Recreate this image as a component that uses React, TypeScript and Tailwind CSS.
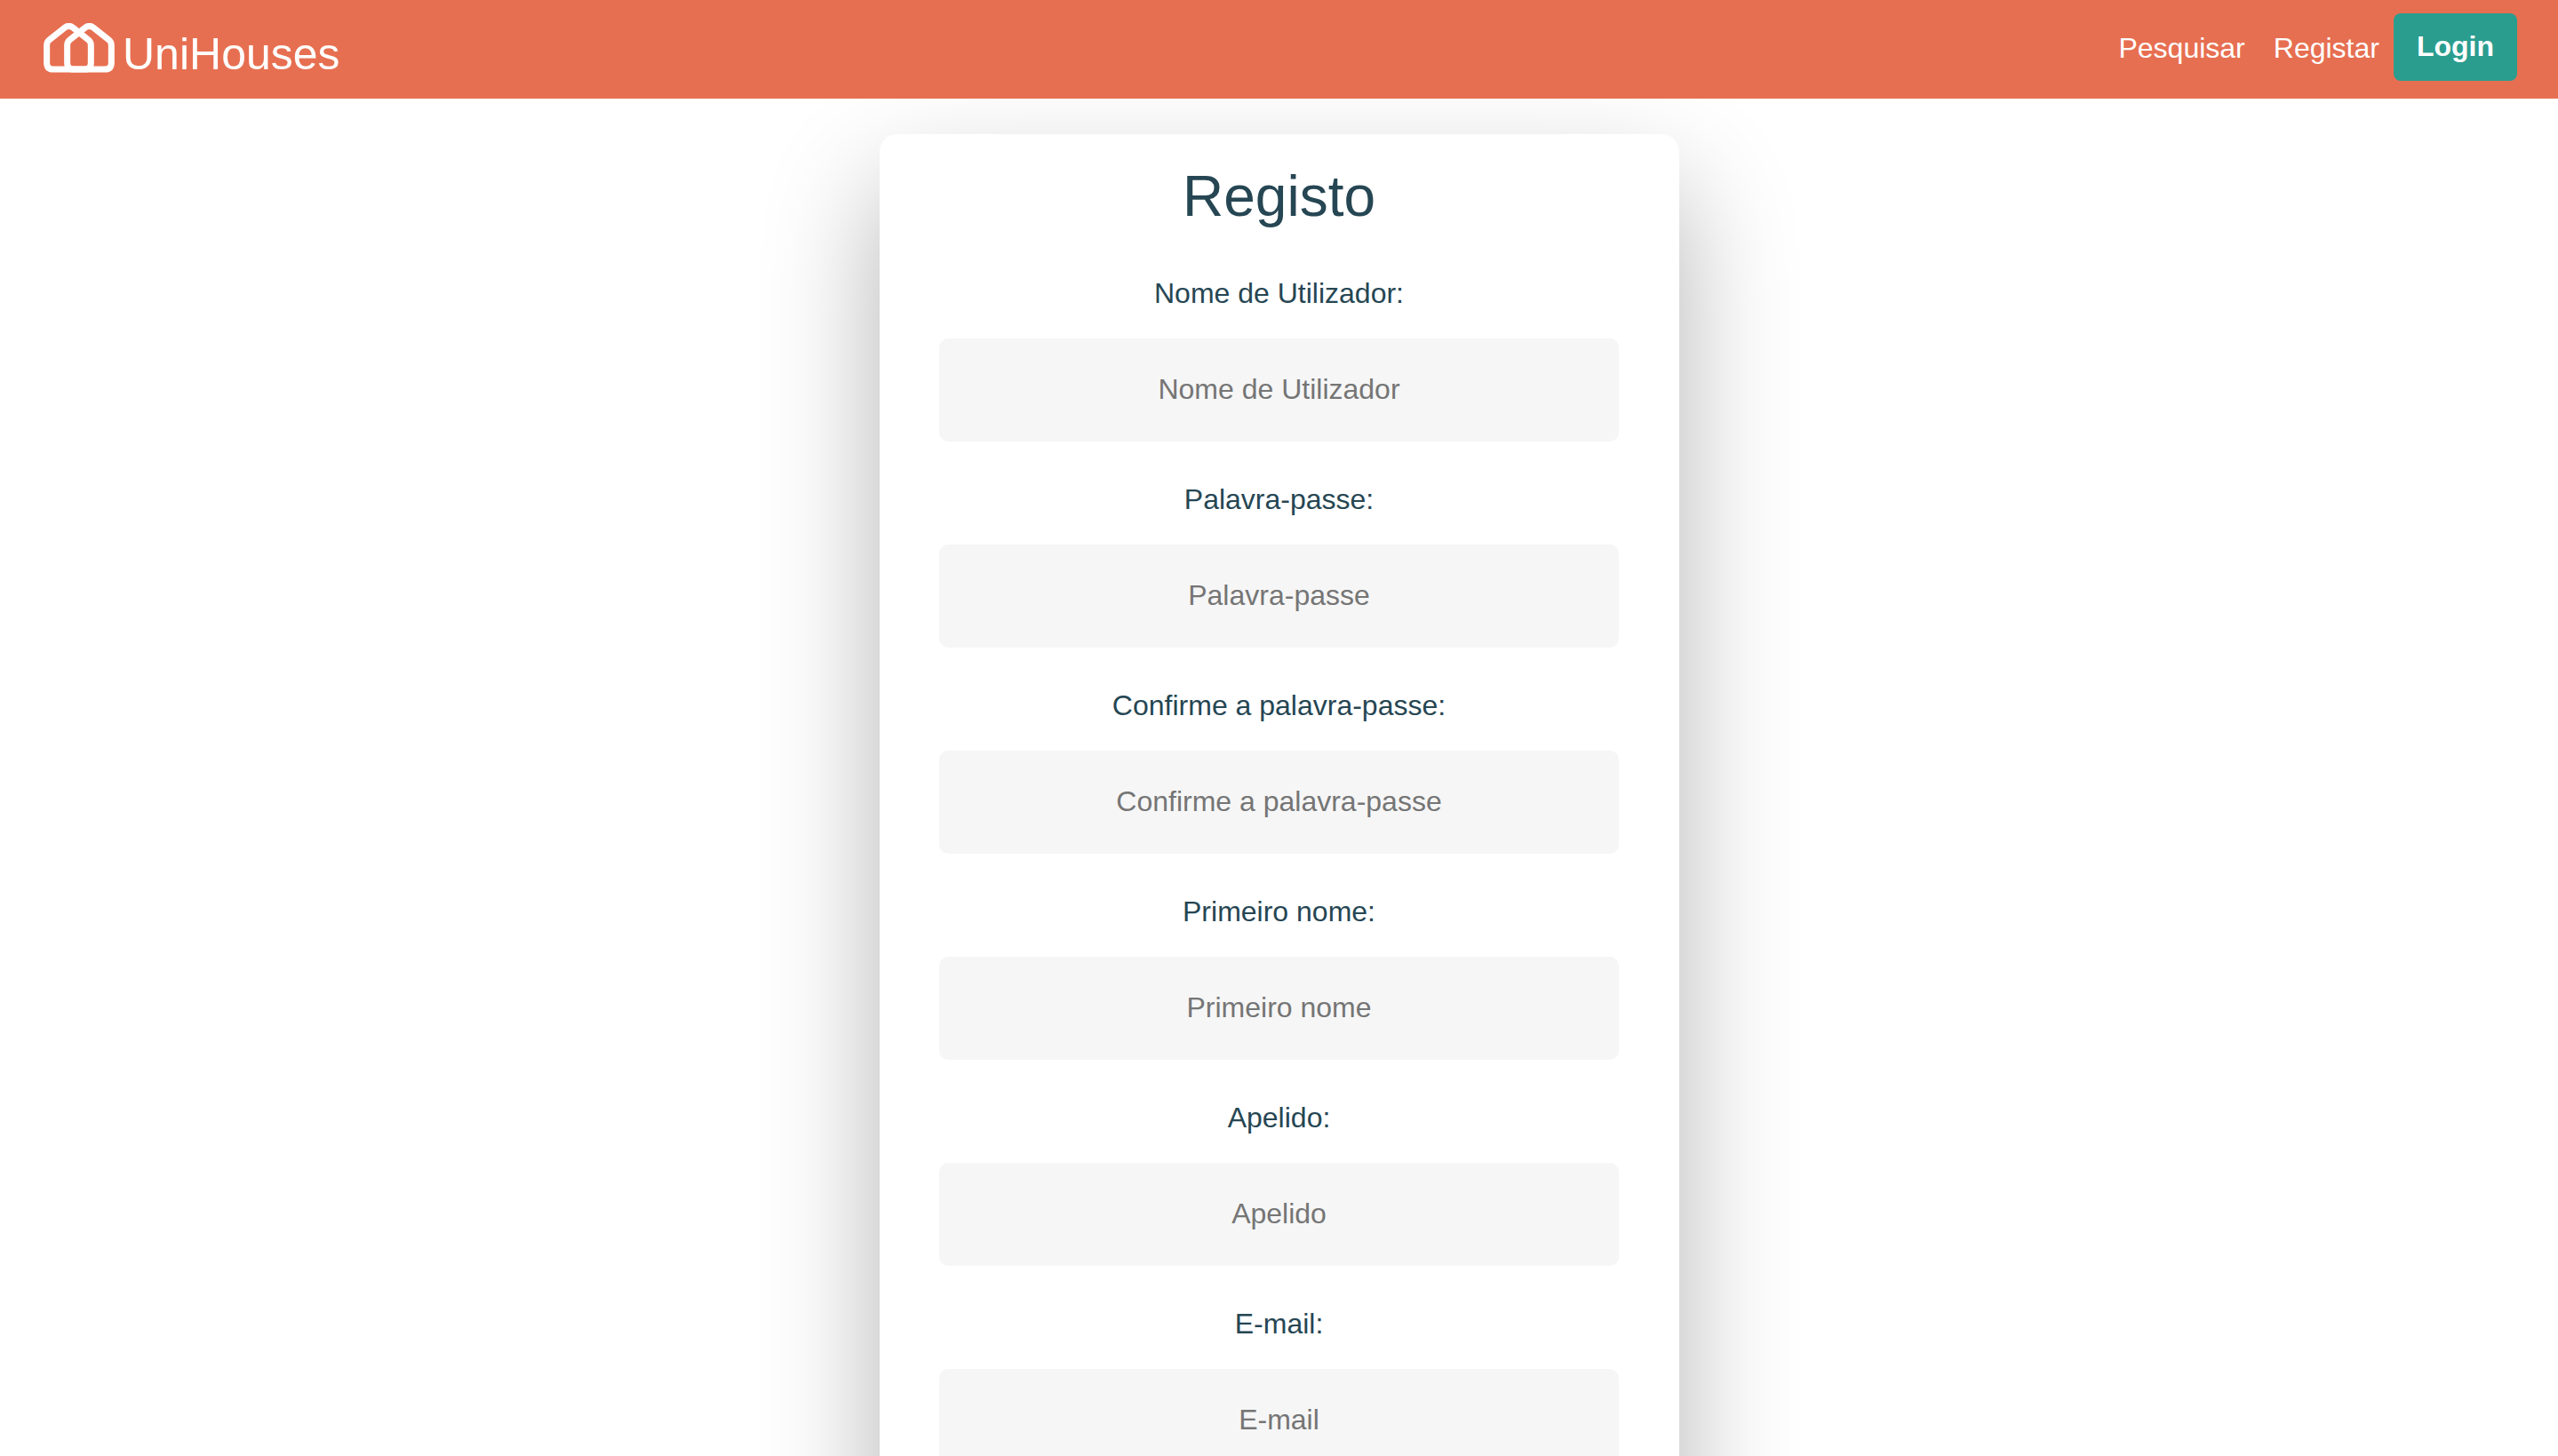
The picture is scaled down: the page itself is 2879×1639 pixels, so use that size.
const fields = [
  { id: "username", label: "Nome de Utilizador", type: "text" },
  { id: "password", label: "Palavra-passe", type: "password" },
  { id: "confirm", label: "Confirme a palavra-passe", type: "password" },
  { id: "first-name", label: "Primeiro nome", type: "text" },
  { id: "last-name", label: "Apelido", type: "text" },
  { id: "email", label: "E-mail", type: "email" },
];

const house =
  "M11 74Q11 63 19 57L72 15Q85.5 5 99 15L152 57Q160 63 160 74V134Q160 156 138 156H33Q11 156 11 134Z";

function Logo() {
  return (
    <svg viewBox="0 0 240 180" className="h-[60px] w-20" aria-hidden="true">
      <g fill="none" stroke="white" strokeWidth="21" strokeLinejoin="round">
        <path d={house} />
        <path d={house} transform="translate(69 0)" />
      </g>
    </svg>
  );
}

function Header() {
  return (
    <header className="relative z-10 flex items-center justify-between bg-[#e76f51] pt-[15px] pr-[46px] pb-5 pl-[49px] text-white">
      <a href="#" className="mt-[11px] flex items-end gap-[9px] self-start">
        <Logo />
        <span className="text-[50px] leading-none">UniHouses</span>
      </a>
      <nav className="flex items-center gap-4 text-[32px] leading-[48px]">
        <a href="#" className="mr-4 pt-0.5">
          Pesquisar
        </a>
        <a href="#" className="pt-0.5">
          Registar
        </a>
        <button type="button" className="rounded-lg bg-[#2a9d8f] px-[26px] pt-[13px] pb-[15px] font-bold">
          Login
        </button>
      </nav>
    </header>
  );
}

export default function App() {
  return (
    <div className="h-screen overflow-hidden bg-white font-['Liberation_Sans',sans-serif]">
      <Header />
      <main className="px-4 pt-10">
        <form className="mx-auto flex w-full max-w-[900px] flex-col items-center rounded-[20px] bg-white pt-[22px] pb-32 text-[#264653] shadow-[0_60px_130px_0_rgba(0,0,0,0.3)]">
          <h1 className="mb-[37px] text-[64px] leading-[96px]">Registo</h1>
          {fields.map((field) => (
            <div key={field.id} className="mb-[41px] flex w-[85%] flex-col items-center gap-[27px] text-[32px] leading-[48px]">
              <label htmlFor={field.id}>{field.label}:</label>
              <input
                id={field.id}
                type={field.type}
                placeholder={field.label}
                className="h-[116px] w-full rounded-[10px] bg-[#f6f6f6] pb-0.5 text-center placeholder:text-[#757575]"
              />
            </div>
          ))}
        </form>
      </main>
    </div>
  );
}
